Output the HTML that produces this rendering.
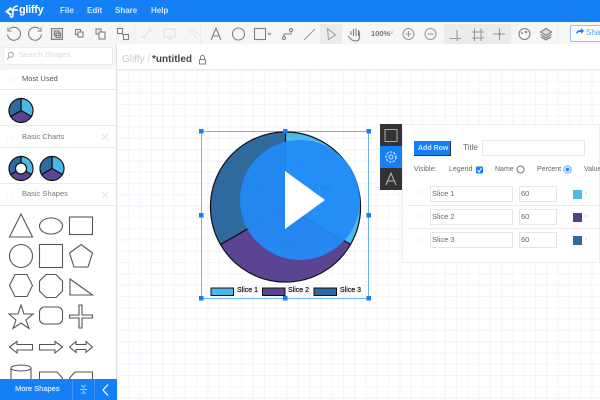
<!DOCTYPE html>
<html><head><meta charset="utf-8"><style>
html,body{margin:0;padding:0;width:600px;height:400px;overflow:hidden;background:#fff}
body{position:relative;font-family:"Liberation Sans",sans-serif}
.a{position:absolute}
.t{position:absolute;white-space:nowrap;line-height:1}
svg{position:absolute;left:0;top:0}
.inp{position:absolute;background:#fff;border:1px solid #e6e6e6;box-sizing:border-box;font-size:7.5px;color:#666;line-height:14px;padding-left:1px;white-space:nowrap}
</style></head><body>
<div class="a" style="left:117px;top:70px;width:483px;height:330px;background-color:#fff;background-image:linear-gradient(#f3f3fa 1px,transparent 1px),linear-gradient(90deg,#f3f3fa 1px,transparent 1px);background-size:11.3px 11.3px"></div>
<div class="a" style="left:0;top:0;width:600px;height:22px;background:#1580f5"></div>
<div class="a" style="left:0;top:22px;width:600px;height:22px;background:#f6f6f6"></div>
<div class="a" style="left:117px;top:44px;width:483px;height:26px;background:#fff;border-bottom:1px solid #e8e8e8;box-sizing:border-box"></div>
<div class="a" style="left:0;top:44px;width:117px;height:356px;background:#fff;border-right:1px solid #e3e3e3;box-sizing:border-box"></div>
<div class="a" style="left:0;top:44px;width:116px;height:26px;background:#f6f6f6"></div>
<div class="a" style="left:3px;top:47px;width:110px;height:18px;background:#fff;border:1px solid #ececec;box-sizing:border-box"></div>
<div class="a" style="left:134px;top:22px;width:1px;height:22px;background:#ebebeb"></div>
<div class="a" style="left:200px;top:22px;width:1px;height:22px;background:#ebebeb"></div>
<div class="a" style="left:320px;top:24px;width:22px;height:20px;background:#ebebeb"></div>
<div class="a" style="left:444px;top:24px;width:67px;height:20px;background:#ebebeb"></div>
<div class="a" style="left:557px;top:22px;width:1px;height:22px;background:#ebebeb"></div>
<svg width="600" height="400" fill="none" stroke="#808080" stroke-width="1.1">
<!-- logo -->
<path d="M5 11.500 L10.500 7 L12 8.500 L8.500 11.500 L12 14.500 L10.500 16 Z" fill="#fff" stroke="none"/>
<path d="M13 15 C12.500 10 13 6 18 6 M10.500 10 H18 M13 15 C13 17.500 11 17.500 10 16" stroke="#fff" stroke-width="1.600"/>
<!-- undo redo -->
<path d="M9.500 29 A6.500 6.500 0 1 1 7.500 34.500 M8 27.500 V31 H11.500"/>
<path d="M39.500 29 A6.500 6.500 0 1 0 41.500 34.500 M41 27.500 V31 H37.500"/>
<!-- layers -->
<rect x="51.500" y="28.500" width="11" height="11" fill="#ddd"/>
<rect x="54.500" y="31" width="4.500" height="4.500"/><rect x="56" y="33" width="4.500" height="4.500"/>
<rect x="75.500" y="29.500" width="5" height="5"/><rect x="78" y="32" width="5" height="5" fill="#f6f6f6"/>
<rect x="96" y="29" width="5" height="5"/><rect x="99" y="32" width="6" height="7" fill="#f6f6f6"/>
<rect x="117.500" y="28.500" width="5" height="5"/><rect x="123.500" y="34.500" width="5" height="5"/><path d="M122 34 l2 1"/>
<!-- disabled -->
<g stroke="#e2e2e2"><path d="M143 38 L151 29 M146 39 L142 36 M148 29 L153 32"/><rect x="164" y="29" width="11" height="8"/><path d="M168 37 L170 40 L172 37"/><path d="M188 29 L197 38 M191 28 L199 35"/></g>
<path d="M211 40 L216 28 L221 40 M213 36 H219"/>
<circle cx="238.500" cy="34" r="6"/>
<rect x="254.500" y="28.500" width="11" height="11"/>
<path d="M268 33 l1.500 1.500 l1.500 -1.500"/>
<circle cx="284" cy="38" r="1.500"/><circle cx="291" cy="30" r="1.500"/><path d="M284 36 V34 H291 V32"/>
<path d="M304 40 L315 29" stroke="#999"/>
<path d="M327.500 28.500 L335.500 35 L328.500 39.500 Z" stroke="#a0a0a0"/>
<path d="M348 36 L352 40 Q355 41.500 358 40.500 Q360 39 359.500 34 L359 31 M351 35 V31 M353.500 36 V29 M356 36 V28.500 M358.500 36 V30"/>
<circle cx="408.500" cy="34" r="5.500" stroke="#999"/><path d="M405.500 34 H411.500 M408.500 31 V37" stroke="#999"/>
<circle cx="430.500" cy="34" r="5.500" stroke="#999"/><path d="M427.500 34 H433.500" stroke="#999"/>
<path d="M450 38.500 H461 M457 30 V41" stroke="#999"/>
<path d="M472 32 H484 M472 38 H484 M474.500 28.500 V41 M481 28.500 V41" stroke="#999"/>
<path d="M493 34 H505 M499.500 28.500 V40" stroke="#999"/><circle cx="499.500" cy="34" r="1.500" fill="#999" stroke="none"/>
<circle cx="524.500" cy="34" r="5.500"/><circle cx="526" cy="32" r="1.300" fill="#888" stroke="none"/><circle cx="522" cy="33" r="1" fill="#888" stroke="none"/>
<path d="M546 28.500 L551.500 32 L546 35.500 L540.500 32 Z M540.500 34.500 L546 38 L551.500 34.500 M541 37 L546 40 L551 37" fill="#ddd"/>
<!-- search -->
<circle cx="10.800" cy="54.800" r="2.500" stroke="#aaa"/><path d="M9 57 L7 59.500" stroke="#aaa"/>
<!-- lock -->
<rect x="199.500" y="59.500" width="6" height="4.500" stroke="#777" stroke-width=".9"/><path d="M200.500 59.500 V57.500 A2 2 0 0 1 204.500 57.500 V59.500" stroke="#777" stroke-width=".9"/>
<!-- sidebar separators -->
<g stroke="#eaeaea" stroke-width="1"><path d="M0 89.500 H116 M0 125.500 H116 M0 147.500 H116 M0 183.500 H116 M0 205.500 H116"/></g>
<g stroke="#eeeeee" stroke-dasharray="1 1" stroke-width="1"><path d="M7 76 V83 M10 76 V83 M13 76 V83 M7 134 V141 M10 134 V141 M13 134 V141 M7 191 V198 M10 191 V198 M13 191 V198"/></g>
<path d="M102 134 L108 140 M108 134 L102 140 M102 192 L108 198 M108 192 L102 198" stroke="#e4e4e4"/>
<!-- mini pies -->
<g stroke="#111" stroke-width="1.200">
<path d="M21 110.500 V98.500 A12 12 0 0 1 31.400 116.500 Z" fill="#4cb8e6"/>
<path d="M21 110.500 L31.400 116.500 A12 12 0 0 1 10.600 116.500 Z" fill="#5b4593"/>
<path d="M21 110.500 L10.600 116.500 A12 12 0 0 1 21 98.500 Z" fill="#2f6a9f"/>
<path d="M21 168.500 V156.500 A12 12 0 0 1 31.400 174.500 Z" fill="#4cb8e6"/>
<path d="M21 168.500 L31.400 174.500 A12 12 0 0 1 10.600 174.500 Z" fill="#5b4593"/>
<path d="M21 168.500 L10.600 174.500 A12 12 0 0 1 21 156.500 Z" fill="#2f6a9f"/>
<circle cx="21" cy="168.500" r="5.500" fill="#fff"/>
<path d="M52 168.500 V156.500 A12 12 0 0 1 62.400 174.500 Z" fill="#4cb8e6"/>
<path d="M52 168.500 L62.400 174.500 A12 12 0 0 1 41.600 174.500 Z" fill="#5b4593"/>
<path d="M52 168.500 L41.600 174.500 A12 12 0 0 1 52 156.500 Z" fill="#2f6a9f"/>
</g>
<!-- shapes -->
<g stroke="#555" stroke-width="1.100" fill="#fff">
<path d="M9.500 237 L21 214 L32.500 237 Z"/>
<ellipse cx="51" cy="226" rx="11.500" ry="8"/>
<rect x="69.500" y="217" width="23" height="17.500"/>
<circle cx="21" cy="256" r="11.500"/>
<rect x="39.500" y="244.500" width="23" height="23"/>
<path d="M81 244.500 L92.500 253 L88 267 H74 L69.500 253 Z"/>
<path d="M15 274.500 H27 L32.500 285.500 L27 296.500 H15 L9.500 285.500 Z"/>
<path d="M46 274.500 H56 L62.500 281 V291 L56 297.500 H46 L39.500 291 V281 Z"/>
<path d="M70 279 L92.500 295 H70 Z"/>
<path d="M21 305 L24 314 H33 L26 320 L29 328.500 L21 323 L13 328.500 L16 320 L9 314 H18 Z"/>
<rect x="39.500" y="307" width="23" height="17" rx="5"/>
<path d="M79 305 H82 V315 H92.500 V318 H82 V328 H79 V318 H69.500 V315 H79 Z"/>
<path d="M9.500 347 L17 341.500 V344.500 H32.500 V350 H17 V353 Z"/>
<path d="M62.500 347 L55 341.500 V344.500 H39.500 V350 H55 V353 Z"/>
<path d="M69.500 347 L76 341.500 V344.500 H86 V341.500 L92.500 347 L86 352.500 V349.500 H76 V352.500 Z"/>
<path d="M11 368 V385 H31 V368"/><ellipse cx="21" cy="368" rx="10" ry="3"/>
<path d="M39.500 372 H57 L62.500 378 V385 H39.500 Z"/>
<path d="M75 372 H92.500 V385 H69.500 V378 Z"/>
</g>
</svg>
<div class="a" style="left:0;top:379px;width:117px;height:21px;background:#1580f5"></div>
<div class="a" style="left:72px;top:379px;width:1px;height:21px;background:#3c95f6"></div>
<div class="a" style="left:94px;top:379px;width:1px;height:21px;background:#3c95f6"></div>
<svg width="600" height="400" fill="none" stroke="#fff">
<path d="M80 389.500 H87 M81.500 385 L83.500 387.500 L85.500 385 M81.500 394 L83.500 391.500 L85.500 394" stroke="#a6cffb"/>
<path d="M108 384.500 L103 390 L108 395.500" stroke-width="1.200"/>
</svg>
<span class="t" style="left:15px;top:385px;font-size:7.500px;color:#d5e8fd;-webkit-text-stroke:.2px #d5e8fd">More Shapes</span>
<span class="t" style="left:19px;top:5px;font-size:11px;font-weight:bold;color:#fff;letter-spacing:-.3px">gliffy</span>
<span class="t" style="left:60px;top:7px;font-size:8px;font-weight:bold;color:#cfe5fd">File</span>
<span class="t" style="left:87px;top:7px;font-size:8px;font-weight:bold;color:#cfe5fd">Edit</span>
<span class="t" style="left:115px;top:7px;font-size:8px;font-weight:bold;color:#cfe5fd">Share</span>
<span class="t" style="left:151px;top:7px;font-size:8px;font-weight:bold;color:#cfe5fd">Help</span>
<span class="t" style="left:19px;top:51px;font-size:7.500px;color:#d8d8d8">Search Shapes</span>
<span class="t" style="left:122px;top:55px;font-size:10px;color:#cacaca">Gliffy /</span>
<span class="t" style="left:152px;top:55px;font-size:10px;font-weight:bold;color:#444">*untitled</span>
<span class="t" style="left:22px;top:75px;font-size:7.500px;color:#555">Most Used</span>
<span class="t" style="left:22px;top:133px;font-size:7.500px;color:#777">Basic Charts</span>
<span class="t" style="left:22px;top:190px;font-size:7.500px;color:#777">Basic Shapes</span>
<span class="t" style="left:371px;top:30px;font-size:7.500px;font-weight:bold;color:#777">100%</span>
<span class="t" style="left:390px;top:31px;font-size:6px;color:#aaa">&#709;</span>
<div class="a" style="left:570px;top:25px;width:40px;height:17px;background:#fff;border:1px solid #8fc0f9;border-radius:2px;box-sizing:border-box"></div>
<svg width="600" height="400" fill="none"><path d="M576 34 Q576 30 581 30 V28 L584 31 L581 34 V32 Q578 32 576 34 Z" fill="#1580f5"/></svg>
<span class="t" style="left:586px;top:29px;font-size:8px;color:#55a2f8">Share</span>

<!-- Chart -->
<svg width="600" height="400" fill="none">
<rect x="201.500" y="131.500" width="167" height="167" stroke="#6db1f8" stroke-width="1"/>
<path d="M285.500 207 V132 A75 75 0 0 1 350.500 244.500 Z" fill="#4cb8e6" stroke="#111" stroke-width="1.200"/>
<path d="M285.500 207 L350.500 244.500 A75 75 0 0 1 220.500 244.500 Z" fill="#5b4593" stroke="#111" stroke-width="1.200"/>
<path d="M285.500 207 L220.500 244.500 A75 75 0 0 1 285.500 132 Z" fill="#2f6a9f" stroke="#111" stroke-width="1.200"/>
<text x="245" y="190" font-family="Liberation Sans" font-size="7" fill="#111">33.3%</text>
<text x="311" y="190" font-family="Liberation Sans" font-size="7" fill="#111">33.3%</text>
<text x="276" y="246" font-family="Liberation Sans" font-size="7" fill="#111">33.3%</text>
<rect x="211" y="288" width="22.500" height="7.500" fill="#4cb8e6" stroke="#111"/>
<rect x="262.500" y="288" width="22.500" height="7.500" fill="#5b4593" stroke="#111"/>
<rect x="314" y="288" width="22.500" height="7.500" fill="#2f6a9f" stroke="#111"/>
<g fill="#1580f5">
<rect x="199" y="129" width="4.500" height="4.500"/><rect x="283" y="129" width="4.500" height="4.500"/><rect x="366.500" y="129" width="4.500" height="4.500"/>
<rect x="199" y="213" width="4.500" height="4.500"/><rect x="366.500" y="213" width="4.500" height="4.500"/>
<rect x="199" y="296" width="4.500" height="4.500"/><rect x="283" y="296" width="4.500" height="4.500"/><rect x="366.500" y="296" width="4.500" height="4.500"/>
</g>
<circle cx="300" cy="200" r="60" fill="#218bf6" fill-opacity=".93"/>
<path d="M285 171 L325 200 L285 229 Z" fill="#fff"/>
</svg>
<span class="t" style="left:237px;top:287px;font-size:7px;color:#111;-webkit-text-stroke:.2px #111">Slice 1</span>
<span class="t" style="left:288px;top:287px;font-size:7px;color:#111;-webkit-text-stroke:.2px #111">Slice 2</span>
<span class="t" style="left:340px;top:287px;font-size:7px;color:#111;-webkit-text-stroke:.2px #111">Slice 3</span>

<!-- Panel -->
<div class="a" style="left:402px;top:124px;width:198px;height:139px;background:#fff;border:1px solid #eee;box-sizing:border-box"></div>
<div class="a" style="left:380px;top:124px;width:22px;height:22px;background:#333"></div>
<div class="a" style="left:380px;top:146px;width:22px;height:22px;background:#1580f5"></div>
<div class="a" style="left:380px;top:168px;width:22px;height:22px;background:#333"></div>
<svg width="600" height="400" fill="none">
<rect x="385" y="129.500" width="12" height="12" stroke="#aaa"/>
<circle cx="391" cy="157" r="2" stroke="#cfe5fd"/>
<circle cx="391" cy="157" r="5" stroke="#cfe5fd" stroke-dasharray="2.500 1.200" stroke-width="1.300"/>
<path d="M386 185 L391 173 L396 185 M388 181 H394" stroke="#bbb"/>
<g stroke="#ececec" stroke-dasharray="1 1"><path d="M416 190 V197 M419 190 V197 M422 190 V197 M416 213 V220 M419 213 V220 M422 213 V220 M416 236 V243 M419 236 V243 M422 236 V243"/></g>
<path d="M408 205.500 H600 M408 228.500 H600" stroke="#eaeaea"/>
<rect x="476" y="166.500" width="7" height="7" rx="1" fill="#1580f5"/><path d="M477.500 170 L479 172 L481.500 168" stroke="#fff" stroke-width="1.100"/>
<circle cx="520.500" cy="169.500" r="3.500" stroke="#777"/>
<circle cx="567.500" cy="169.500" r="3.800" fill="#cfe3fb" stroke="#7db5f3"/><circle cx="567.500" cy="169.500" r="1.600" fill="#1580f5"/>
<path d="M585 193 l1.500 0 M585 216 l1.500 0 M585 239 l1.500 0" stroke="#bbb"/>
</svg>
<div class="a" style="left:414px;top:141px;width:37px;height:15px;background:#1580f5;border-right:1px solid #333;border-bottom:1px solid #333;box-sizing:border-box"></div>
<span class="t" style="left:418px;top:145px;font-size:7px;font-weight:bold;color:#d8e9fe">Add Row</span>
<span class="t" style="left:463px;top:144px;font-size:8px;color:#666">Title</span>
<div class="inp" style="left:482px;top:140px;width:103px;height:16px"></div>
<span class="t" style="left:414px;top:166px;font-size:7px;color:#666">Visible:</span>
<span class="t" style="left:449px;top:166px;font-size:7px;color:#666">Legend</span>
<span class="t" style="left:495px;top:166px;font-size:7px;color:#666">Name</span>
<span class="t" style="left:537px;top:166px;font-size:7px;color:#666">Percent</span>
<span class="t" style="left:584px;top:166px;font-size:7px;color:#666">Value</span>
<div class="inp" style="left:430px;top:186px;width:83px;height:16px">Slice 1</div>
<div class="inp" style="left:519px;top:186px;width:38px;height:16px">60</div>
<div class="inp" style="left:430px;top:209px;width:83px;height:16px">Slice 2</div>
<div class="inp" style="left:519px;top:209px;width:38px;height:16px">60</div>
<div class="inp" style="left:430px;top:232px;width:83px;height:16px">Slice 3</div>
<div class="inp" style="left:519px;top:232px;width:38px;height:16px">60</div>
<div class="a" style="left:573px;top:190px;width:9px;height:9px;background:#4cb8e6"></div>
<div class="a" style="left:573px;top:213px;width:9px;height:9px;background:#54408f"></div>
<div class="a" style="left:573px;top:236px;width:9px;height:9px;background:#2f6a9f"></div>
</body></html>
